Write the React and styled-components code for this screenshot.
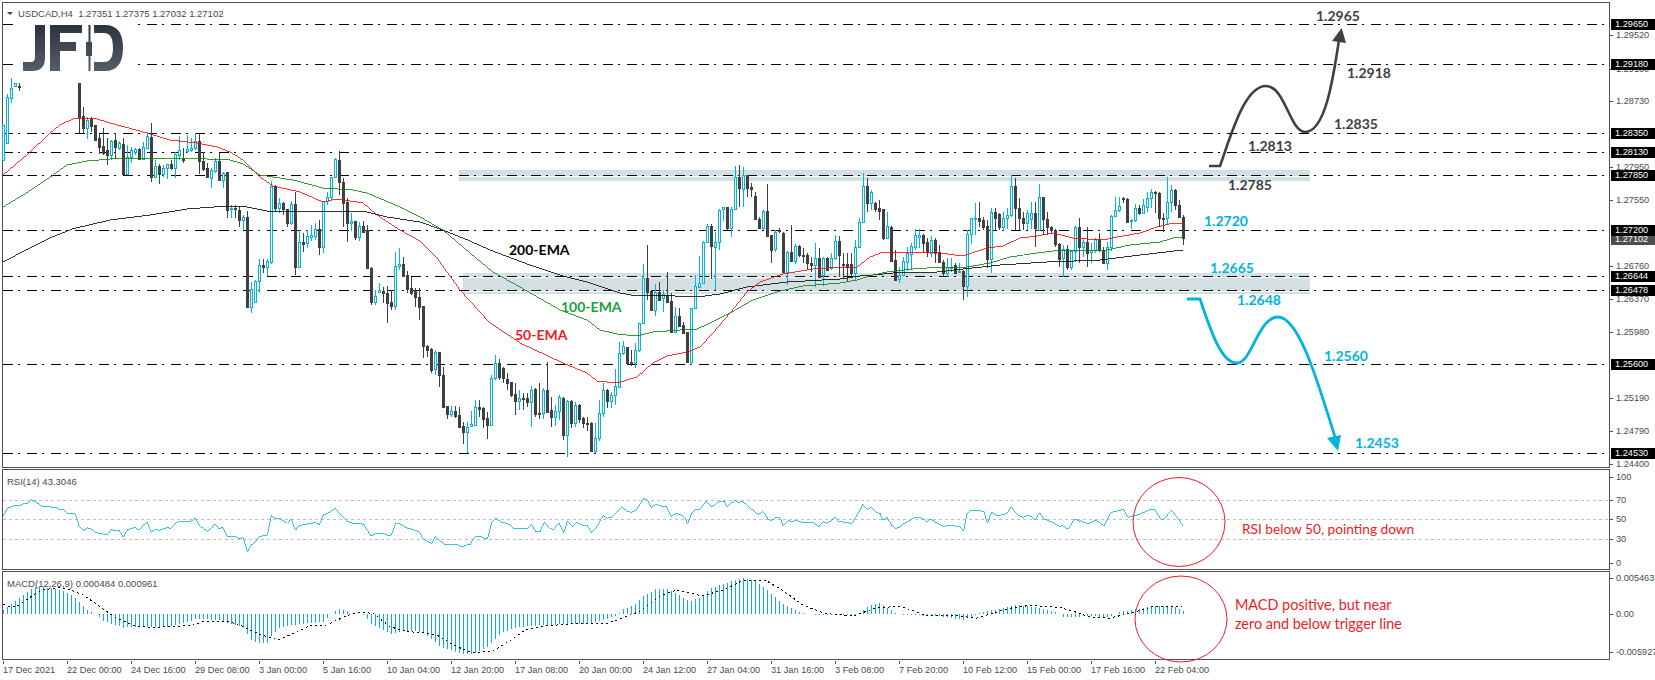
import React from 'react';
import styled, { createGlobalStyle } from 'styled-components';

const BLUE = '#00b4dc';
const DARK = '#404040';

const GlobalStyle = createGlobalStyle`
  html, body {
    background: #fff;
    height: 680px;
    margin: 0;
    overflow: hidden;
    width: 1655px;
  }
`;

const Page = styled.div`
  display: flex;
  flex-direction: column;
  font-family: 'Liberation Sans', Arial, sans-serif;
  gap: 1px;
  height: 680px;
  padding: 2px 0 0 2px;
  box-sizing: border-box;
  width: 1655px;
`;

const PaneRow = styled.div`
  display: flex;
  height: ${({ $height }) => $height}px;
`;

const Pane = styled.div`
  border: 1px solid #505050;
  box-sizing: border-box;
  height: 100%;
  position: relative;
  width: 1608px;
`;

const ChartSvg = styled.svg`
  display: block;
  height: 100%;
  overflow: visible;
  position: relative;
  width: 100%;
`;

const Legend = styled.div`
  align-items: center;
  color: #4a4a4a;
  display: flex;
  font-size: 9.5px;
  left: ${({ $left }) => $left}px;
  line-height: 11px;
  position: absolute;
  top: ${({ $top }) => $top}px;
  white-space: pre;
  z-index: 2;
`;

const Caret = styled.span`
  border-left: 3px solid transparent;
  border-right: 3px solid transparent;
  border-top: 3.5px solid #444;
  height: 0;
  margin-right: 5px;
  width: 0;
`;

const Axis = styled.div`
  flex: 1;
  position: relative;
`;

const AxisItem = styled.div`
  color: #4a4a4a;
  font-size: 9.2px;
  height: 11px;
  left: 0;
  line-height: 11px;
  padding-left: 6px;
  position: absolute;
  white-space: nowrap;

  &::before {
    background: #505050;
    content: '';
    height: 1px;
    left: 0;
    position: absolute;
    top: 5px;
    width: 3px;
  }
`;

const PriceTag = styled.div`
  background: ${({ $grey }) => ($grey ? '#4d4d4d' : '#000')};
  color: #fff;
  font-size: 9.2px;
  height: 11px;
  left: 1px;
  line-height: 11px;
  padding-left: 4px;
  position: absolute;
  width: 40px;
`;

const TimeAxis = styled.div`
  display: flex;
  padding-left: 1px;
`;

const TimeCell = styled.div`
  color: #4a4a4a;
  flex: 0 0 64px;
  font-size: 9.2px;
  line-height: 11px;
  padding-top: 4px;
  position: relative;
  white-space: nowrap;

  &::before {
    background: #505050;
    content: '';
    height: 3px;
    left: 0;
    position: absolute;
    top: 0;
    width: 1px;
  }
`;

const LevelLine = styled.line`
  shape-rendering: crispEdges;
  stroke: #000;
  stroke-dasharray: 10 5 2 7;
  stroke-width: 1;
`;

const GridLine = styled.line`
  shape-rendering: crispEdges;
  stroke: #c0c0c0;
  stroke-dasharray: 3 3;
  stroke-width: 1;
`;

const Zone = styled.rect`
  fill: #d3dfe2;
`;

const ZoneGap = styled.rect`
  fill: #fff;
  opacity: 0.85;
`;

const CandleShape = styled.path`
  fill: ${({ $fill }) => $fill};
  shape-rendering: crispEdges;
`;

const MaskBox = styled.rect`
  fill: #fff;
`;

const Ema = styled.polyline`
  fill: none;
  shape-rendering: crispEdges;
  stroke: ${({ $color }) => $color};
  stroke-width: 0.8;
`;

const Trail = styled.path`
  fill: none;
  stroke: ${({ $color }) => $color};
  stroke-width: ${({ $width }) => $width};
`;

const Head = styled.polygon`
  fill: ${({ $color }) => $color};
`;

const ChartLabel = styled.text`
  fill: ${({ $color }) => $color};
  font-family: Lato, 'Liberation Sans', sans-serif;
  font-size: 14px;
  font-weight: 700;
`;

const Note = styled.text`
  fill: #ed1c24;
  font-family: Lato, 'Liberation Sans', sans-serif;
  font-size: ${({ $size }) => $size}px;
`;

const Ring = styled.ellipse`
  fill: none;
  stroke: #ed1c24;
  stroke-width: 1;
`;

const RsiLine = styled.polyline`
  fill: none;
  shape-rendering: crispEdges;
  stroke: ${BLUE};
  stroke-width: 0.8;
`;

const MacdBars = styled.path`
  shape-rendering: crispEdges;
  stroke: #10aed6;
  stroke-width: 1;
`;

const SignalLine = styled.polyline`
  fill: none;
  shape-rendering: crispEdges;
  stroke: #000;
  stroke-dasharray: 2 3;
  stroke-width: 1;
`;

// rows are [up, high, bodyTop, bodyBottom, low], read off the picture
const bars = (from, originY, rows) =>
  rows.map(([up, hi, top, bot, lo], k) => ({
    i: from + k,
    up,
    hi: originY + hi / 3,
    top: originY + top / 3,
    bot: originY + bot / 3,
    lo: originY + lo / 3,
  }));

const CANDLES = [
  ...bars(0, 0, [
    [1, 375, 375, 480, 480], [1, 283, 290, 428, 430], [1, 235, 265, 293, 308], [1, 250, 250, 258, 262],
    [0, 250, 258, 260, 272],
  ]),
  ...bars(19, 0, [
    [0, 250, 250, 352, 400], [0, 322, 348, 385, 400], [1, 352, 360, 383, 416], [0, 352, 358, 378, 395],
    [0, 376, 376, 420, 420], [0, 402, 414, 440, 462], [0, 385, 438, 458, 465], [0, 415, 450, 466, 495],
    [1, 420, 422, 464, 480], [0, 400, 420, 442, 477], [1, 424, 430, 444, 450], [0, 415, 433, 522, 525],
    [1, 435, 472, 522, 525], [1, 440, 450, 472, 490], [1, 445, 448, 456, 465], [0, 445, 446, 477, 478],
    [1, 425, 442, 476, 478], [1, 395, 407, 444, 448], [0, 370, 412, 530, 545], [1, 480, 498, 530, 530],
    [0, 492, 498, 522, 552], [1, 495, 505, 522, 530], [1, 492, 492, 505, 538], [0, 480, 492, 503, 510],
    [1, 455, 462, 505, 535], [1, 408, 451, 465, 480], [0, 445, 476, 478, 490], [1, 405, 448, 453, 458],
    [1, 415, 445, 450, 455], [1, 400, 424, 445, 450], [0, 400, 424, 484, 522], [0, 455, 484, 507, 512],
    [0, 490, 504, 532, 535], [1, 505, 511, 533, 565], [1, 475, 484, 512, 520], [0, 458, 484, 540, 542],
    [1, 515, 520, 540, 565], [0, 515, 517, 630, 655], [1, 615, 624, 628, 655], [0, 615, 624, 628, 655],
    [0, 618, 630, 660, 680], [1, 645, 652, 660, 690],
  ]),
  ...bars(61, 150, [
    [0, 183, 202, 470, 470], [1, 395, 418, 470, 490], [1, 390, 394, 455, 460], [1, 326, 346, 394, 430],
    [0, 326, 346, 352, 370], [1, 328, 334, 352, 378], [1, 92, 108, 335, 342], [0, 105, 108, 175, 185],
    [1, 145, 160, 174, 188], [0, 155, 160, 178, 195], [0, 178, 178, 218, 232], [1, 152, 163, 218, 225],
    [0, 125, 162, 352, 375], [1, 240, 277, 352, 352], [0, 250, 277, 281, 305], [1, 240, 258, 280, 295],
    [1, 225, 255, 260, 272], [1, 220, 238, 257, 270], [0, 210, 238, 290, 315], [1, 152, 154, 290, 308],
    [1, 125, 140, 153, 165], [1, 80, 82, 140, 150], [1, 25, 28, 82, 85], [0, 2, 30, 95, 135],
    [0, 85, 95, 158, 230], [0, 145, 155, 218, 275], [1, 190, 213, 218, 242], [0, 212, 213, 260, 270],
    [1, 215, 228, 260, 272], [0, 212, 228, 245, 245], [0, 225, 240, 355, 355], [0, 352, 354, 456, 465],
    [1, 420, 438, 455, 465], [1, 400, 420, 425, 430], [0, 410, 424, 430, 460], [0, 408, 430, 458, 518],
    [0, 420, 456, 468, 480], [1, 305, 348, 467, 480], [1, 295, 342, 347, 360], [0, 322, 343, 378, 380],
    [0, 362, 376, 416, 430], [0, 380, 414, 428, 435], [0, 415, 420, 442, 470], [0, 415, 442, 470, 510],
    [0, 468, 468, 588, 625], [0, 585, 588, 600, 620], [0, 595, 598, 660, 670], [1, 600, 606, 658, 675],
    [0, 605, 606, 676, 710], [0, 650, 676, 770, 770], [0, 768, 768, 792, 806], [1, 768, 784, 792, 800],
    [0, 768, 783, 797, 805], [0, 772, 795, 830, 830], [0, 815, 828, 845, 882], [1, 815, 830, 845, 910],
    [1, 783, 822, 828, 830], [1, 750, 772, 824, 825], [0, 750, 772, 777, 800], [0, 772, 775, 807, 833],
    [0, 787, 805, 824, 867], [1, 675, 685, 824, 825], [1, 615, 640, 685, 690], [0, 628, 640, 680, 690],
    [0, 650, 655, 685, 700], [0, 670, 687, 700, 720], [0, 695, 697, 735, 740], [0, 700, 732, 752, 795],
    [1, 720, 745, 752, 780], [0, 730, 745, 747, 780], [0, 730, 745, 755, 770], [1, 708, 720, 755, 830],
    [0, 715, 718, 792, 800], [0, 700, 788, 792, 807], [1, 715, 720, 790, 806], [0, 635, 720, 785, 790],
    [0, 740, 780, 800, 830], [1, 765, 783, 800, 828], [1, 735, 742, 783, 810], [0, 742, 744, 855, 870],
    [1, 750, 752, 855, 920], [0, 750, 752, 818, 835], [1, 755, 765, 818, 832], [0, 762, 765, 807, 820],
    [0, 800, 805, 818, 835], [0, 800, 818, 822, 842], [0, 815, 820, 902, 905], [1, 820, 865, 902, 910],
    [1, 750, 790, 865, 872], [1, 700, 720, 790, 800], [0, 718, 720, 752, 775], [1, 725, 736, 752, 775],
    [1, 658, 708, 735, 765], [1, 575, 610, 710, 715], [1, 572, 588, 610, 615], [0, 590, 590, 638, 640],
    [0, 600, 636, 640, 648], [1, 580, 600, 640, 655], [1, 518, 520, 600, 605], [1, 342, 385, 520, 522],
    [0, 285, 385, 425, 450], [0, 420, 422, 480, 480], [1, 402, 425, 480, 497], [0, 395, 425, 450, 450],
    [1, 420, 433, 445, 485], [0, 365, 435, 455, 460], [0, 430, 453, 545, 548], [1, 472, 498, 545, 548],
    [0, 475, 498, 527, 530], [0, 515, 525, 548, 550], [0, 545, 546, 635, 635], [1, 475, 475, 635, 645],
    [1, 375, 408, 475, 478], [1, 318, 400, 410, 412], [1, 272, 275, 400, 402], [1, 222, 228, 275, 277],
    [0, 222, 228, 288, 388], [1, 245, 275, 290, 420], [1, 178, 180, 275, 300], [1, 170, 172, 178, 212],
    [0, 170, 172, 235, 240], [1, 172, 178, 235, 260], [1, 48, 82, 178, 180], [0, 45, 82, 115, 170],
    [1, 52, 75, 118, 170], [0, 75, 75, 115, 140], [0, 100, 112, 116, 140], [0, 125, 138, 206, 210],
    [0, 200, 206, 233, 235], [1, 180, 184, 233, 240], [0, 102, 184, 258, 260], [0, 255, 256, 300, 338],
    [1, 240, 246, 298, 305], [0, 235, 240, 242, 250], [0, 245, 248, 365, 365], [1, 302, 305, 365, 405],
    [0, 225, 305, 333, 335], [1, 282, 288, 332, 342], [0, 285, 288, 315, 320], [0, 295, 315, 317, 340],
    [0, 310, 315, 340, 360], [0, 320, 340, 345, 365], [1, 278, 325, 345, 410], [0, 295, 325, 380, 380],
    [1, 322, 325, 375, 408], [0, 320, 325, 360, 360], [1, 310, 325, 355, 360], [1, 255, 272, 325, 330],
    [0, 258, 272, 315, 380], [0, 310, 341, 343, 385], [0, 310, 342, 350, 395], [0, 310, 342, 370, 385],
    [1, 270, 290, 370, 390], [1, 205, 217, 292, 295], [1, 70, 108, 217, 220], [0, 85, 108, 158, 185],
    [1, 120, 127, 158, 180], [0, 155, 158, 178, 185], [0, 150, 175, 182, 210], [0, 178, 178, 265, 270],
    [1, 185, 228, 265, 268], [0, 228, 230, 332, 335], [0, 300, 330, 390, 392], [1, 352, 376, 386, 398],
    [1, 322, 333, 375, 378], [1, 290, 310, 335, 362], [1, 278, 288, 312, 360], [1, 238, 255, 290, 300],
    [1, 238, 255, 260, 295], [0, 252, 255, 278, 310], [0, 265, 275, 305, 320], [1, 258, 270, 308, 320],
    [0, 265, 270, 310, 340], [0, 285, 305, 335, 340], [0, 330, 335, 370, 378], [1, 325, 350, 368, 380],
    [1, 325, 350, 355, 365], [0, 340, 345, 368, 372], [1, 340, 362, 366, 370], [0, 360, 362, 407, 450],
    [1, 240, 252, 407, 440], [1, 205, 205, 252, 282], [1, 160, 205, 208, 255], [0, 155, 205, 212, 230],
    [0, 200, 210, 230, 240], [0, 210, 228, 326, 355], [1, 175, 187, 326, 368], [0, 175, 187, 205, 240],
    [0, 190, 192, 230, 240], [1, 185, 205, 230, 242], [1, 175, 196, 204, 238], [1, 75, 107, 196, 200],
    [0, 85, 107, 175, 240], [0, 145, 175, 204, 240], [0, 185, 203, 220, 240], [1, 180, 190, 220, 240],
    [1, 155, 190, 208, 238], [0, 155, 190, 235, 290], [1, 102, 142, 240, 240], [0, 140, 142, 208, 255],
    [0, 185, 208, 230, 255], [0, 228, 230, 240, 250], [0, 238, 240, 283, 290], [0, 280, 283, 326, 352],
    [1, 285, 298, 323, 382], [0, 285, 298, 350, 360], [1, 300, 302, 352, 360], [1, 228, 230, 302, 335],
    [0, 205, 230, 290, 340], [1, 265, 277, 290, 320], [0, 230, 277, 310, 352], [1, 280, 300, 306, 340],
    [1, 265, 267, 300, 310], [0, 250, 267, 300, 305], [0, 290, 300, 338, 340], [1, 275, 290, 338, 360],
    [1, 195, 198, 290, 302], [1, 142, 180, 198, 200], [1, 140, 168, 180, 185], [0, 140, 145, 148, 158],
    [0, 145, 148, 215, 220], [1, 208, 210, 213, 238], [1, 163, 175, 210, 215], [0, 165, 175, 190, 195],
    [1, 148, 165, 190, 190], [1, 125, 145, 170, 185], [1, 118, 125, 145, 175], [0, 122, 125, 130, 190],
    [0, 125, 128, 203, 230], [0, 190, 203, 206, 245], [1, 80, 155, 205, 225], [1, 105, 120, 155, 185],
    [0, 118, 120, 165, 180], [0, 150, 165, 202, 205], [0, 195, 202, 265, 285],
  ]),
];

const snapped = (list) =>
  list.map(({ up, i, hi, top, bot, lo }) => {
    const x = 3 + 4 * i;
    const [h, t, b, l] = [hi, top, bot, lo].map(Math.round);
    return { up, x, h, t, b: Math.max(b, t + 1), l: Math.max(l, h + 1) };
  });

const CANDLE_CELLS = snapped(CANDLES);

const rect = (x, y, w, h) => `M${x} ${y}h${w}v${h}h${-w}z`;

const candlePath = (up) =>
  CANDLE_CELLS.filter((c) => Boolean(c.up) === up)
    .map((c) => rect(c.x, c.h, 1, c.l - c.h) + rect(c.x - 1, c.t, 3, c.b - c.t + 1))
    .join('');

const hollowPath = CANDLE_CELLS.filter((c) => c.up && c.b - c.t > 1)
  .map((c) => rect(c.x, c.t + 1, 1, c.b - c.t - 1))
  .join('');

const toPoints = (pts) => pts.map(([x, y]) => `${x},${y}`).join(' ');

const fromZoom = (ox, sx, oy, pts) => pts.map(([x, y]) => [ox + x / sx, oy + y / 3]);

const joinZooms = (a, b, c) => [
  ...fromZoom(0, 3, 425, a),
  ...fromZoom(420, 2.376, 470, b),
  ...fromZoom(1000, 2.39, 430, c).filter(([x]) => x > 1080),
];

const EMA_50 = [
  [3, 175], [28, 154], [50, 133], [60, 125], [75, 118], [97, 119], [117, 125], [140, 131], [170, 140], [197, 143],
  [217, 147], [230, 152], [243, 160], [260, 177], [273, 186], [300, 192], [323, 202], [337, 199], [363, 203],
  [377, 215], [400, 230], [420, 241], [437, 258], [460, 290], [490, 323], [520, 343], [563, 363], [587, 373],
  [597, 381], [617, 383], [637, 377], [653, 363], [667, 356], [687, 352], [700, 347], [713, 333], [730, 313],
  [747, 292], [760, 282], [783, 274], [813, 269], [840, 267], [857, 267], [870, 257], [883, 252], [893, 253],
  [917, 252], [940, 253], [963, 256], [987, 248], [1003, 246], [1020, 238], [1037, 236], [1053, 233], [1073, 238],
  [1103, 240], [1117, 237], [1140, 233], [1157, 227], [1173, 223], [1183, 223],
];

const EMA_100 = [
  [3, 207], [28, 192], [53, 175], [67, 165], [87, 161], [110, 159], [160, 158], [207, 159], [227, 159], [243, 164],
  [260, 175], [293, 180], [323, 188], [353, 190], [367, 193], [400, 207], [420, 217], [443, 230], [470, 253],
  [493, 272], [520, 287], [560, 310], [587, 320], [600, 330], [617, 334], [637, 336], [653, 332], [680, 330],
  [697, 329], [710, 323], [730, 313], [753, 300], [780, 291], [803, 286], [840, 283], [857, 280], [873, 275],
  [887, 272], [913, 269], [940, 267], [967, 267], [990, 263], [1010, 257], [1037, 253], [1053, 251], [1087, 250],
  [1107, 250], [1130, 245], [1160, 242], [1173, 238], [1183, 237],
];

const EMA_200 = [
  [3, 262], [30, 248], [50, 238], [72, 229], [110, 220], [150, 215], [187, 209], [227, 206], [247, 207], [267, 211],
  [363, 211], [387, 217], [420, 222], [440, 229], [463, 238], [490, 250], [530, 265], [563, 276], [587, 282],
  [620, 293], [637, 296], [653, 295], [697, 297], [720, 294], [747, 287], [787, 282], [840, 279], [860, 276],
  [873, 275], [893, 273], [937, 272], [963, 269], [1000, 265], [1047, 262], [1100, 260], [1140, 255], [1183, 250],
];

const RSI = joinZooms(
  [
    [10, 272], [22, 250], [46, 240], [58, 242], [70, 237], [82, 235], [94, 224], [106, 230], [130, 246], [142, 245],
    [166, 247], [178, 252], [190, 253], [202, 265], [226, 267], [238, 305], [250, 317], [262, 308], [274, 312],
    [286, 322], [298, 325], [322, 330], [334, 313], [346, 317], [358, 316], [370, 337], [382, 315], [394, 310],
    [406, 308], [418, 316], [430, 300], [442, 292], [454, 322], [466, 312], [478, 316], [490, 311], [502, 308],
    [514, 310], [526, 295], [538, 288], [574, 288], [586, 278], [598, 302], [610, 310], [622, 319], [634, 310],
    [646, 296], [658, 312], [668, 306], [682, 336], [706, 335], [718, 341], [730, 338], [742, 380], [754, 360],
    [766, 350], [778, 335], [802, 330], [814, 272], [826, 280], [840, 281], [862, 295], [874, 282], [886, 316],
    [898, 302], [922, 297], [946, 293], [958, 300], [970, 270], [982, 266], [1006, 250], [1018, 265], [1042, 290],
    [1066, 297], [1078, 295], [1090, 298], [1114, 333], [1126, 326], [1150, 325], [1162, 331], [1174, 331],
    [1186, 297], [1198, 296], [1222, 309], [1246, 316], [1258, 322],
  ],
  [
    [0, 190], [8, 208], [28, 220], [36, 200], [60, 225], [85, 223], [100, 230], [120, 222], [130, 200], [145, 200],
    [160, 208], [170, 158], [180, 145], [195, 158], [208, 160], [222, 175], [255, 175], [265, 163], [275, 185],
    [285, 185], [295, 157], [308, 175], [318, 178], [330, 158], [342, 188], [350, 153], [362, 170], [372, 156],
    [388, 167], [398, 168], [408, 188], [420, 170], [435, 137], [445, 145], [458, 140], [470, 125], [480, 110],
    [490, 122], [502, 127], [515, 118], [532, 85], [540, 90], [550, 112], [560, 103], [572, 108], [585, 108],
    [597, 140], [607, 130], [620, 135], [630, 143], [636, 163], [645, 130], [655, 118], [665, 118], [680, 93],
    [692, 110], [700, 107], [712, 93], [722, 93], [730, 110], [748, 90], [755, 100], [765, 93], [780, 108],
    [797, 128], [805, 133], [815, 125], [828, 148], [835, 152], [845, 143], [855, 143], [863, 167], [875, 152],
    [885, 155], [892, 150], [905, 156], [920, 158], [935, 158], [948, 170], [958, 155], [965, 160], [975, 155],
    [987, 140], [995, 155], [1015, 157], [1025, 163], [1040, 132], [1052, 103], [1062, 118], [1072, 112],
    [1085, 128], [1093, 130], [1100, 150], [1110, 142], [1120, 165], [1130, 175], [1140, 172], [1150, 160],
    [1160, 155], [1175, 143], [1190, 143], [1205, 155], [1213, 147], [1230, 160], [1245, 170], [1255, 166],
    [1270, 168], [1285, 172], [1292, 182], [1300, 130], [1310, 120], [1325, 120], [1340, 125], [1348, 160],
    [1358, 127], [1372, 138], [1395, 130], [1405, 110], [1415, 130], [1432, 143], [1445, 135], [1455, 142],
    [1462, 150], [1472, 128], [1482, 147], [1500, 155], [1520, 170], [1525, 165], [1540, 178], [1555, 147],
    [1568, 155],
  ],
  [
    [192, 272], [210, 282], [230, 270], [248, 288], [265, 248], [295, 238], [305, 262], [320, 258], [335, 252],
    [360, 238], [370, 240], [385, 268], [392, 268], [410, 240], [428, 270], [437, 287],
  ],
);

const HISTOGRAM = joinZooms(
  [
    [10, 555], [58, 518], [94, 492], [106, 485], [130, 485], [154, 490], [190, 497], [215, 510], [240, 532], [262, 555],
    [290, 567], [310, 588], [370, 608], [400, 605], [500, 605], [540, 597], [590, 582], [660, 585], [680, 592],
    [730, 608], [754, 645], [770, 654], [802, 654], [814, 635], [838, 610], [880, 600], [970, 590], [982, 578],
    [994, 568], [1006, 557], [1018, 552], [1042, 558], [1056, 568], [1090, 568], [1114, 597], [1174, 628],
    [1210, 618], [1260, 620],
  ],
  [
    [8, 490], [50, 530], [100, 553], [125, 553], [160, 530], [180, 505], [200, 485], [240, 470], [300, 465], [400, 460],
    [440, 450], [470, 435], [480, 420], [510, 405], [530, 378], [560, 358], [590, 357], [620, 378], [640, 395],
    [670, 380], [690, 355], [730, 338], [770, 322], [800, 335], [830, 365], [860, 400], [900, 425], [925, 432],
    [960, 436], [1040, 436], [1055, 418], [1075, 402], [1095, 400], [1125, 425], [1140, 433], [1170, 435],
    [1200, 437], [1250, 440], [1290, 450], [1320, 435], [1340, 425], [1380, 416], [1415, 405], [1470, 412],
    [1510, 425], [1530, 442], [1568, 440],
  ],
  [
    [210, 558], [260, 562], [290, 545], [340, 535], [370, 527], [420, 532], [440, 545],
  ],
);

const SIGNAL = joinZooms(
  [
    [10, 538], [30, 545], [50, 545], [100, 510], [130, 495], [170, 488], [200, 490], [250, 510], [300, 545], [350, 580],
    [410, 604], [450, 607], [520, 605], [580, 600], [610, 590], [680, 588], [720, 600], [760, 620], [800, 635],
    [835, 645], [880, 625], [930, 602], [980, 600], [1040, 572], [1080, 562], [1120, 565], [1170, 605], [1220, 620],
    [1260, 622],
  ],
  [
    [8, 487], [40, 495], [80, 525], [120, 547], [170, 545], [210, 515], [250, 480], [300, 468], [370, 460], [440, 462],
    [480, 445], [520, 425], [570, 378], [610, 360], [670, 378], [720, 360], [770, 330], [820, 330], [860, 360],
    [910, 405], [960, 430], [1030, 438], [1080, 415], [1140, 408], [1200, 435], [1280, 437], [1320, 445], [1400, 415],
    [1450, 406], [1520, 412], [1568, 430],
  ],
  [
    [210, 560], [260, 565], [310, 550], [370, 528], [435, 528],
  ],
);

const valueAt = (pts, x) => {
  const next = pts.findIndex(([px]) => px >= x);
  if (next <= 0) return pts[Math.max(next, 0)][1];
  const [x0, y0] = pts[next - 1];
  const [x1, y1] = pts[next];
  return y0 + ((y1 - y0) * (x - x0)) / (x1 - x0);
};

const MACD_ZERO = 614;

const macdPath = Array.from({ length: 296 }, (_, i) => {
  const x = 3.5 + 4 * i;
  const y = Math.round(valueAt(HISTOGRAM, x));
  return y === MACD_ZERO ? '' : `M${x} ${MACD_ZERO}V${y}`;
}).join('');

const LEVELS = [24, 64, 133, 152, 175, 230, 276, 290, 364, 453];
const RSI_LEVELS = [500, 519, 539];

const PRICE_LABELS = [
  ['1.29520', 35], ['1.29130', 69], ['1.28730', 101], ['1.27950', 167], ['1.27550', 200], ['1.26760', 266],
  ['1.26370', 299], ['1.25980', 332], ['1.25190', 398], ['1.24790', 431], ['1.24400', 464],
];

const PRICE_TAGS = [
  ['1.27102', 239, true], ['1.29650', 24], ['1.29180', 64], ['1.28350', 133], ['1.28130', 152], ['1.27850', 175],
  ['1.27200', 230], ['1.26644', 276], ['1.26478', 290], ['1.25600', 364], ['1.24530', 453],
];

const RSI_AXIS = [['100', 477], ['70', 500], ['50', 519], ['30', 539], ['0', 563]];
const MACD_AXIS = [['0.005463', 578], ['0.00', 614], ['-0.005927', 652]];

const TIMES = [
  '17 Dec 2021', '22 Dec 00:00', '24 Dec 16:00', '29 Dec 08:00', '3 Jan 00:00', '5 Jan 16:00', '10 Jan 04:00',
  '12 Jan 20:00', '17 Jan 08:00', '20 Jan 00:00', '24 Jan 12:00', '27 Jan 04:00', '31 Jan 16:00', '3 Feb 08:00',
  '7 Feb 20:00', '10 Feb 12:00', '15 Feb 00:00', '17 Feb 16:00', '22 Feb 04:00',
];

const TARGETS = [
  ['1.2965', 1316, 21, DARK], ['1.2918', 1347, 78, DARK], ['1.2835', 1334, 129, DARK], ['1.2813', 1248, 151, DARK],
  ['1.2785', 1228, 190, DARK], ['1.2720', 1204, 226, BLUE], ['1.2665', 1210, 273, BLUE], ['1.2648', 1237, 305, BLUE],
  ['1.2560', 1324, 361, BLUE], ['1.2453', 1355, 448, BLUE], ['200-EMA', 509, 255, '#000'],
  ['100-EMA', 561, 312, '#1aa33a'], ['50-EMA', 515, 340, '#ed1c24'],
];

const Logo = () => (
  <g fill="url(#jfdFill)">
    <path d="M35 25H45V58Q45 71 32 71H23V62H31Q35 62 35 57Z" />
    <path d="M50 25H82V33H60V42H76V51H60V71H50Z" />
    <path d="M88.5 25H90.5V42H92V56H90.5V71H88.5V56H86V42H88.5Z" />
    <path d="M94 25H105Q123 25 123 48Q123 71 105 71H94V62H104Q113 62 113 48Q113 33 104 33H94Z" />
  </g>
);

const MainChart = () => (
  <ChartSvg viewBox="3 3 1606 464">
    <defs>
      <linearGradient id="jfdFill" x1="0" y1="0" x2="0" y2="1">
        <stop offset="0" stopColor="#2c3440" />
        <stop offset="1" stopColor="#555f68" />
      </linearGradient>
    </defs>
    <Zone x="459" y="170" width="851" height="11" />
    <ZoneGap x="459" y="176" width="851" height="1" />
    <Zone x="463" y="273" width="847" height="21" />
    <ZoneGap x="463" y="277" width="847" height="1" />
    <ZoneGap x="463" y="291" width="847" height="1" />
    {LEVELS.map((y) => (
      <LevelLine key={y} x1="3" x2="1608" y1={y + 0.5} y2={y + 0.5} />
    ))}
    <CandleShape $fill={DARK} d={candlePath(false)} />
    <CandleShape $fill={BLUE} d={candlePath(true)} />
    <CandleShape $fill="#fff" d={hollowPath} />
    <Ema $color="#000" points={toPoints(EMA_200)} />
    <Ema $color="#008000" points={toPoints(EMA_100)} />
    <Ema $color="#f00" points={toPoints(EMA_50)} />
    <MaskBox x="17" y="3" width="120" height="80" />
    <Logo />
    <Trail
      $color={DARK}
      $width={2.6}
      d="M1209 166H1220C1232 132 1245 86 1266 86C1285 86 1290 132 1305 132C1325 132 1333 80 1339 40"
    />
    <Head $color={DARK} points="1341.7,28 1332,41 1346,43" />
    <Trail
      $color={BLUE}
      $width={2.8}
      d="M1187 299H1200C1212 335 1222 363 1237 363C1252 363 1258 317 1278 317C1300 317 1320 390 1335 437"
    />
    <Head $color={BLUE} points="1338,451 1327,438 1341,435" />
    {TARGETS.map(([text, x, y, color]) => (
      <ChartLabel key={text} x={x} y={y} $color={color}>
        {text}
      </ChartLabel>
    ))}
  </ChartSvg>
);

const RsiChart = () => (
  <ChartSvg viewBox="3 470 1606 99">
    {RSI_LEVELS.map((y) => (
      <GridLine key={y} x1="3" x2="1608" y1={y + 0.5} y2={y + 0.5} />
    ))}
    <RsiLine points={toPoints(RSI)} />
    <Ring cx="1179" cy="522" rx="46" ry="44.5" />
    <Note x="1242" y="534" $size={13.7}>RSI below 50, pointing down</Note>
  </ChartSvg>
);

const MacdChart = () => (
  <ChartSvg viewBox="3 572 1606 87">
    <MacdBars d={macdPath} />
    <SignalLine points={toPoints(SIGNAL)} />
    <Ring cx="1181" cy="619" rx="46" ry="43" />
    <Note x="1235" y="610" $size={14.4}>MACD positive, but near</Note>
    <Note x="1235" y="629" $size={14.4}>zero and below trigger line</Note>
  </ChartSvg>
);

const AxisLabels = ({ items, origin }) =>
  items.map(([text, y]) => (
    <AxisItem key={text} style={{ top: y - origin - 5 }}>
      {text}
    </AxisItem>
  ));

const App = () => (
  <Page>
    <GlobalStyle />
    <PaneRow $height={466}>
      <Pane>
        <Legend $left={4} $top={5}>
          <Caret />
          USDCAD,H4{'  '}1.27351 1.27375 1.27032 1.27102
        </Legend>
        <MainChart />
      </Pane>
      <Axis>
        <AxisLabels items={PRICE_LABELS} origin={2} />
        {PRICE_TAGS.map(([text, y, grey]) => (
          <PriceTag key={text} $grey={grey} style={{ top: y - 2 - 5 }}>
            {text}
          </PriceTag>
        ))}
      </Axis>
    </PaneRow>
    <PaneRow $height={101}>
      <Pane>
        <Legend $left={4} $top={6}>RSI(14) 43.3046</Legend>
        <RsiChart />
      </Pane>
      <Axis>
        <AxisLabels items={RSI_AXIS} origin={469} />
      </Axis>
    </PaneRow>
    <PaneRow $height={89}>
      <Pane>
        <Legend $left={4} $top={6}>MACD(12,26,9) 0.000484 0.000961</Legend>
        <MacdChart />
      </Pane>
      <Axis>
        <AxisLabels items={MACD_AXIS} origin={571} />
      </Axis>
    </PaneRow>
    <TimeAxis>
      {TIMES.map((label) => (
        <TimeCell key={label}>{label}</TimeCell>
      ))}
    </TimeAxis>
  </Page>
);

export default App;
